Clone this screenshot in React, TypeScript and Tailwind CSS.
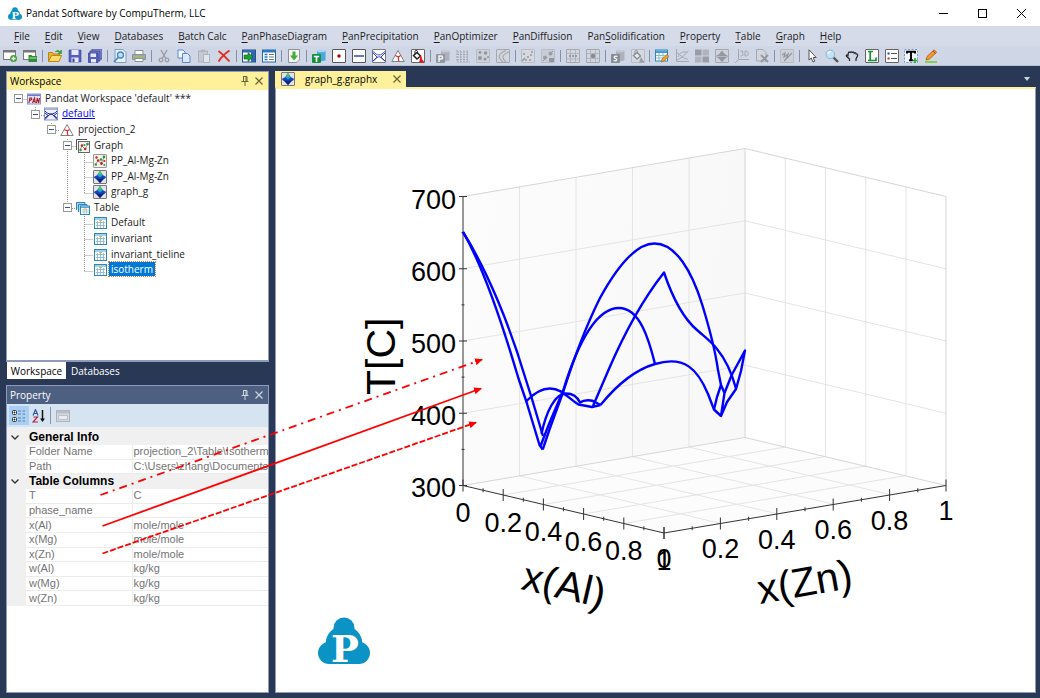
import { ReactNode } from "react";
import clsx from "clsx";

/* ---------- icons (14 x 14 grid) ---------- */

function Icon({ children, dim }: { children: ReactNode; dim?: boolean }) {
  return (
    <svg viewBox="0 0 14 14" className={clsx("h-[14px] w-[14px] shrink-0", dim && "opacity-80")} fill="none" aria-hidden="true">
      {children}
    </svg>
  );
}

const GREY = "#9a9da4";

const Frame = ({ stroke = "#555", fill = "#fff" }: { stroke?: string; fill?: string }) => (
  <rect x=".5" y=".5" width="13" height="13" rx=".5" stroke={stroke} fill={fill} />
);

const SurfaceIcon = () => (
  <Icon>
    <Frame stroke="#777" fill="#e4e4e8" />
    <path d="M.8 7C2.500 5.500 4 6 5 4L7 1 9 4c1 2 2.500 1.500 4.200 3C12 9 10 9 9 11l-2 2-2-2C4 9 2 9 .8 7Z" fill="#1746b8" />
    <path d="M4.500 5.500 5.500 3 7 1 8.500 3 9.500 5.500 7 7.500Z" fill="#18a8d8" />
    <path d="M5.300 4 7 1 8.700 4 7 5Z" fill="#62c832" />
    <path d="M2.500 8 7 9 11.500 8 9 10.800 7 13 5 10.800Z" fill="#10247c" />
  </Icon>
);

const ScatterIcon = () => (
  <Icon>
    <Frame stroke="#999" fill="#f3f3ee" />
    <path d="M2.500 10.500 5 6.500 8 9.500 11 3.500" stroke="#777" strokeWidth=".7" />
    <g fill="#c8202a">
      <circle cx="3.500" cy="3.500" r="1.200" />
      <circle cx="5.200" cy="6.500" r="1.300" />
      <circle cx="8.500" cy="9.500" r="1.400" />
      <circle cx="11.300" cy="7" r="1.100" />
    </g>
    <g fill="#2c9a38">
      <circle cx="2.800" cy="10.500" r="1.200" />
      <circle cx="11" cy="3" r="1.400" />
      <circle cx="8" cy="5.500" r="1.200" />
      <circle cx="11.300" cy="11" r="1" />
    </g>
  </Icon>
);

const GraphFolderIcon = () => (
  <Icon>
    <path d="M.5 11V.5H11" stroke="#555" />
    <rect x="2.500" y="2.500" width="11" height="11" stroke="#666" fill="#f3f3ee" />
    <path d="m4 11 2-4 3 3 3-5" stroke="#777" strokeWidth=".7" />
    <g fill="#c8202a">
      <circle cx="6" cy="6.500" r="1.300" />
      <circle cx="9.200" cy="10" r="1.300" />
    </g>
    <g fill="#2c9a38">
      <circle cx="4.600" cy="11" r="1.200" />
      <circle cx="11.500" cy="5" r="1.300" />
      <circle cx="8.500" cy="6" r="1" />
    </g>
  </Icon>
);

const TableIcon = () => (
  <Icon>
    <rect x="1.500" y="1.500" width="12" height="11" stroke="#2f86b8" fill="#fff" />
    <path d="M2 2h11v2H2Z" fill="#9fd2ea" />
    <path d="M3 6.500h9M3 9.500h9M4.500 5v7M7.500 5v7M10.500 5v7" stroke="#7fb4d4" strokeWidth=".8" />
    <path d="M6 4.500h3" stroke="#e6b84a" />
  </Icon>
);

const TablesIcon = () => (
  <Icon>
    <path d="M.5 9V1.500H9V3" stroke="#2f86b8" fill="#a9d8ee" />
    <path d="M2.500 11V3.500H11V5" stroke="#2f86b8" fill="#a9d8ee" />
    <rect x="4.500" y="5" width="9" height="8.500" stroke="#2f86b8" fill="#fff" />
    <path d="M5 5.500h8V7H5Z" fill="#58a8d0" />
    <path d="M6 9h7M6 11h7M8 8v5M10.500 8v5" stroke="#9cc4da" strokeWidth=".8" />
    <path d="M8 8h3" stroke="#e6b84a" />
  </Icon>
);

const WorkspaceIcon = () => (
  <Icon>
    <rect x=".5" y="2" width="13" height="10" stroke="#8a94c4" fill="#dfe3f5" />
    <path d="M1 2.500h12v1.500H1Z" fill="#6b7cc0" />
    <path d="M2 11 2.800 6h1.700l.3 1.500L3 8.500M5.500 11l2-5 .8 5M6.300 9.500h2M9.500 11l.7-5 1.500 5 .8-5" stroke="#a81c2c" strokeWidth="1.100" />
  </Icon>
);

const SectionIcon = () => (
  <Icon>
    <Frame stroke="#777" />
    <path d="M1 2.500 4 5c2 1.300 4 1.300 6 0l3-2.500M1 4l4 4-4 4M13 4 9 8l4 4M1 12.500 5 8.500c1.500-1 2.500-1 4 0l4 4" stroke="#2a38c0" strokeWidth=".9" />
  </Icon>
);

const BatchIcon = () => (
  <Icon>
    <rect x=".5" y="1" width="13" height="12" stroke="#8c96c4" fill="#eef1fc" />
    <path d="M1 1h12v2H1Z" fill="#a8b2dc" />
    <path d="M1 4c3 4 9 4 12 0M1 12.500 5 8c1.500-1 2.500-1 4 0l4 4.500M1 6l3 2.500L1 11M13 6l-3 2.500L13 11" stroke="#1c2c9c" />
  </Icon>
);

const TriangleIcon = () => (
  <Icon>
    <path d="M7 1.500 13.200 12.500H.8Z" fill="#fff" stroke="#777" strokeWidth=".9" />
    <path d="M4.300 6.500 7.300 8M9.700 6.500 7.300 8M7.300 8 7.800 12.500" stroke="#e02020" strokeWidth="1.100" />
  </Icon>
);

/* toolbar drawings, group by group */
const TOOLBAR: { label: string; icon: ReactNode }[][] = [
  [
    {
      label: "New workspace",
      icon: (
        <Icon>
          <rect x=".5" y="1.500" width="12" height="9" fill="#fff" stroke="#777" />
          <path d="M1 2h11v1.500H1Z" fill="#777" />
          <circle cx="10.500" cy="9.500" r="3.500" fill="#3fa33a" />
          <path d="M8.500 9.500h4M10.500 7.500v4" stroke="#fff" strokeWidth="1.300" />
        </Icon>
      ),
    },
    {
      label: "Open workspace",
      icon: (
        <Icon>
          <rect x=".5" y="1.500" width="12" height="9" fill="#fff" stroke="#777" />
          <path d="M1 2h11v1.500H1Z" fill="#777" />
          <path d="M5.500 13V6h3l1 1H14v6Z" fill="#2f8f35" />
          <path d="M6.500 9h7" stroke="#b7e2b2" />
        </Icon>
      ),
    },
  ],
  [
    {
      label: "Open",
      icon: (
        <Icon>
          <path d="M.5 12.500V3.500h4l1 1.500h6v3" fill="#e8b53c" stroke="#b98618" />
          <path d="m.5 12.500 3-6h10l-2.500 6Z" fill="#ffd968" stroke="#b98618" />
          <path d="M7 3c2-2 4-2 5 0M13.500 1v3.500H10Z" stroke="#35a035" fill="#35a035" strokeWidth=".8" />
        </Icon>
      ),
    },
    {
      label: "Save",
      icon: (
        <Icon>
          <path d="M1 1h12v12H1Z" fill="#5560bd" stroke="#3a4598" strokeWidth=".6" />
          <path d="M3.500 1h7v5h-7Z" fill="#e8eafa" />
          <path d="M3.500 8.500h7V13h-7Z" fill="#e8eafa" />
          <path d="M4.500 9.500h2V13h-2Z" fill="#3a4598" />
        </Icon>
      ),
    },
    {
      label: "Save all",
      icon: (
        <Icon>
          <path d="M4 0h10v10H4Z" fill="#8d95d4" stroke="#3a4598" strokeWidth=".8" />
          <path d="M2 2h10v10H2Z" fill="#7079c8" stroke="#3a4598" strokeWidth=".8" />
          <path d="M.5 4h9.500v9.500H.5Z" fill="#5560bd" stroke="#3a4598" strokeWidth=".8" />
          <path d="M2.500 4.500H8V8H2.500ZM3 10h5v3.500H3Z" fill="#e8eafa" />
        </Icon>
      ),
    },
  ],
  [
    {
      label: "Print preview",
      icon: (
        <Icon>
          <path d="M2 .5h8l3 3v10H2Z" fill="#e8f1fb" stroke="#7d9cc4" />
          <circle cx="7.500" cy="6" r="3" fill="#bfe0f8" stroke="#4a84c4" strokeWidth="1.300" />
          <path d="M5 8.500 1 13" stroke="#4a84c4" strokeWidth="1.800" />
        </Icon>
      ),
    },
    {
      label: "Print",
      icon: (
        <Icon>
          <path d="M3 1.500h8v4H3Z" fill="#fff" stroke="#8c9298" />
          <path d="M.5 5.500h13v5H.5Z" fill="#a2a8a4" stroke="#8c9298" />
          <path d="M3 9.500h8v3H3Z" fill="#fff" stroke="#8c9298" />
          <path d="M2 7.500h10" stroke="#8ccf4c" />
        </Icon>
      ),
    },
  ],
  [
    {
      label: "Cut",
      icon: (
        <Icon>
          <path d="m4 1 4.500 8M10 1 5.500 9" stroke={GREY} strokeWidth="1.500" />
          <circle cx="4" cy="11" r="1.800" stroke={GREY} strokeWidth="1.300" />
          <circle cx="10" cy="11" r="1.800" stroke={GREY} strokeWidth="1.300" />
        </Icon>
      ),
    },
    {
      label: "Copy",
      icon: (
        <Icon>
          <path d="M1 1h5l2 2v6H1Z" fill="#f5f9ff" stroke="#5c86c8" />
          <path d="M5.500 4.500h5l2.500 2.500v6.500H5.500Z" fill="#dbe9fb" stroke="#5c86c8" />
        </Icon>
      ),
    },
    {
      label: "Paste",
      icon: (
        <Icon dim>
          <path d="M1.500 2h9v11h-9Z" fill="#c3c7cf" stroke="#a5a9b1" />
          <path d="M4 .8h4v2H4Z" fill="#a5a9b1" />
          <path d="M6.500 5.500h6v8h-6Z" fill="#e6e8ee" stroke="#a5a9b1" />
        </Icon>
      ),
    },
    {
      label: "Delete",
      icon: (
        <Icon>
          <path d="M1.500 2c4 3 8 7 11 10.500M12.500 1.500C8 4.500 4 8.500 1.500 12.500" stroke="#e0301c" strokeWidth="1.900" />
        </Icon>
      ),
    },
  ],
  [
    {
      label: "Workspace view",
      icon: (
        <Icon>
          <rect x=".5" y="1" width="13" height="12" fill="#fff" stroke="#24508c" />
          <path d="M1 1h12v2.500H1ZM9 3.500h4V13H9Z" fill="#2f68b0" />
          <path d="M2 6h4V3.500L11 8l-5 4.500V10H2Z" fill="#20a030" stroke="#0b5c18" strokeWidth=".6" />
        </Icon>
      ),
    },
    {
      label: "Property view",
      icon: (
        <Icon>
          <rect x=".5" y="1" width="13" height="12" fill="#fff" stroke="#2468a8" />
          <path d="M1 1h12v2.500H1Z" fill="#2f78c0" />
          <path d="M2.500 5.500h3M2.500 8h3M2.500 10.500h3" stroke="#2f78c0" strokeWidth="1.500" />
          <path d="M7 5.500h5M7 8h5M7 10.500h5" stroke="#777" />
        </Icon>
      ),
    },
  ],
  [
    {
      label: "Load database",
      icon: (
        <Icon>
          <path d="M1.500.5h11v9c0 2-1.500 3.500-3.500 4H1.500Z" fill="#f6f6f4" stroke="#8e9298" />
          <path d="M5.500 2.500h3v4H11l-4 5-4-5h2.500Z" fill="#42ac3c" />
        </Icon>
      ),
    },
  ],
  [
    {
      label: "Thermodynamic database",
      icon: (
        <Icon>
          <path d="M5 2c0-1.500 8.500-1.500 8.500 0v9c0 1.500-8.500 1.500-8.500 0Z" fill="#4aa6dc" />
          <ellipse cx="9.200" cy="2" rx="4.200" ry="1.300" fill="#a4d8f4" />
          <rect x="0" y="5" width="9" height="9" rx="1" fill="#149038" />
          <path d="M1.800 7.500h5.400M4.500 7.500V13" stroke="#fff" strokeWidth="1.700" />
        </Icon>
      ),
    },
    {
      label: "Point calculation",
      icon: (
        <Icon>
          <Frame />
          <circle cx="7" cy="7" r="1.800" fill="#a01010" />
        </Icon>
      ),
    },
    {
      label: "Line calculation",
      icon: (
        <Icon>
          <Frame />
          <path d="M2 7h10" stroke="#2d45cc" strokeWidth="1.500" />
        </Icon>
      ),
    },
    { label: "Section calculation", icon: <SectionIcon /> },
    { label: "Projection", icon: <TriangleIcon /> },
    {
      label: "Solidification",
      icon: (
        <Icon>
          <Frame stroke="#666" />
          <path d="m2.500 6.500 3.500-3 3.500 3.500-3.500 3Z" fill="#fff" stroke="#222" strokeWidth="1.500" />
          <path d="M4 5.500V2.500C4 1 6.500 1 6.500 2.500V5" stroke="#222" />
          <path d="M8 13.500 9.500 8 13.500 13.500Z" fill="#e01818" />
          <path d="m9 7 1.500 2.500" stroke="#e01818" strokeWidth="1.500" />
        </Icon>
      ),
    },
  ],
  [
    {
      label: "Precipitation database",
      icon: (
        <Icon dim>
          <path d="M5 2c0-1.500 8.500-1.500 8.500 0v9c0 1.500-8.500 1.500-8.500 0Z" fill="#a6a9b0" />
          <ellipse cx="9.200" cy="2" rx="4.200" ry="1.300" fill="#c6c8ce" />
          <rect x="0" y="5" width="9" height="9" rx="1" fill="#84878e" />
          <path d="M3 13V7h2c2.200 0 2.200 3 0 3H3" stroke="#fff" strokeWidth="1.400" />
        </Icon>
      ),
    },
    {
      label: "Precipitation grid",
      icon: (
        <Icon dim>
          <path d="M1 1v12h13M1 3h12M1 5.500h12M1 8h12M1 10.500h12" stroke={GREY} strokeDasharray="2 1" />
          <path d="M4.500 1v12M8 1v12M11.500 1v12" stroke={GREY} strokeWidth=".6" />
        </Icon>
      ),
    },
    {
      label: "Particle size",
      icon: (
        <Icon dim>
          <Frame stroke="#b3b6bd" fill="#cdd0d6" />
          <g fill="#85888f">
            <circle cx="4" cy="3.500" r="1.400" />
            <circle cx="9.500" cy="4" r="1.800" />
            <circle cx="4" cy="9" r="2" />
            <circle cx="9" cy="10" r="1.500" />
            <circle cx="12" cy="8" r="1" />
          </g>
        </Icon>
      ),
    },
    {
      label: "TTT diagram",
      icon: (
        <Icon dim>
          <Frame stroke={GREY} fill="#d4d6dc" />
          <path d="M10 1.500C1 5 2 9 7 13M13 3C5 6 6 9 10 13" stroke={GREY} strokeWidth="1.200" />
        </Icon>
      ),
    },
  ],
  [
    {
      label: "Optimizer point",
      icon: (
        <Icon dim>
          <Frame stroke="#b3b6bd" fill="#d8dade" />
          <path d="M1 12 4 9M2 5h2M6 8h2M9 6h2M4 11h2M8 11h2M10 3h2" stroke="#85888f" strokeWidth="1.500" />
        </Icon>
      ),
    },
    {
      label: "Optimizer control",
      icon: (
        <Icon dim>
          <Frame stroke="#b3b6bd" fill="#c9ccd2" />
          <path d="M2 12 6 8M8 6l4-4" stroke="#85888f" />
          <circle cx="9.500" cy="4.500" r="2" fill="#8d9097" />
          <circle cx="4" cy="8.500" r="2" fill="#8d9097" />
          <path d="M8 9h5v4H8Z" fill="#85888f" />
        </Icon>
      ),
    },
  ],
  [
    {
      label: "Diffusion grid",
      icon: (
        <Icon dim>
          <Frame stroke={GREY} fill="#d4d6dc" />
          <path d="M4.500 1v12M9.500 1v12M1 4.500h12M1 10h12" stroke={GREY} strokeWidth=".7" />
          <path d="M3 7h8" stroke="#777a82" strokeWidth="1.500" strokeDasharray="2 1" />
        </Icon>
      ),
    },
    {
      label: "Diffusion point",
      icon: (
        <Icon dim>
          <Frame stroke={GREY} fill="#d4d6dc" />
          <path d="M1 4.500h12M1 9.500h12M4.500 1v12M9.500 1v12" stroke={GREY} strokeWidth=".7" />
          <circle cx="7" cy="7" r="2.200" fill="#777a82" />
        </Icon>
      ),
    },
  ],
  [
    {
      label: "Solidification database",
      icon: (
        <Icon dim>
          <path d="M5 2c0-1.500 8.500-1.500 8.500 0v9c0 1.500-8.500 1.500-8.500 0Z" fill="#a6a9b0" />
          <ellipse cx="9.200" cy="2" rx="4.200" ry="1.300" fill="#c6c8ce" />
          <rect x="0" y="5" width="9" height="9" rx="1" fill="#777a82" />
          <path d="M6.500 7.500c-3-1-4.500 1-2 2s1 3-2 2" stroke="#fff" strokeWidth="1.300" />
        </Icon>
      ),
    },
    {
      label: "Solidification simulation",
      icon: (
        <Icon dim>
          <Frame stroke="#b3b6bd" fill="#d8dade" />
          <path d="m2.500 6.500 3.500-3 3.500 3.500-3.500 3Z" fill="#f0f0f2" stroke="#777a82" strokeWidth="1.300" />
          <path d="M4 5.500V2.500C4 1 6.500 1 6.500 2.500V5" stroke="#777a82" />
          <path d="M8 13.500 10 8 13.500 13.500Z" fill="#8d9097" />
        </Icon>
      ),
    },
  ],
  [
    {
      label: "Edit table",
      icon: (
        <Icon>
          <rect x=".5" y="1" width="12" height="11" fill="#fff" stroke="#2f86b8" />
          <path d="M1 1.500h11V4H1Z" fill="#3fa0d8" />
          <path d="M1 6.500h11M1 9h11M4 4v8M8 4v8" stroke="#8bbad2" />
          <path d="m6 13 1-3 5-4.500 2 2L9 12Z" fill="#f0a030" stroke="#a86010" strokeWidth=".6" />
        </Icon>
      ),
    },
    {
      label: "Plot",
      icon: (
        <Icon dim>
          <path d="M1.500 0v12.500H14M1.500 11c4-1 7-4 12-9M1.500 4c3 0 6 6 11 6M3 8c2-5 4-5 9-5" stroke={GREY} />
        </Icon>
      ),
    },
    {
      label: "Tile",
      icon: (
        <Icon dim>
          <path d="M0 .5h6.500v6H0ZM7.500 7.500H14v6H7.500Z" fill="#8d9097" />
          <path d="M7.500.5H14v6H7.500ZM0 7.500h6.500v6H0Z" fill="#a9acb3" />
        </Icon>
      ),
    },
    {
      label: "Surface",
      icon: (
        <Icon dim>
          <Frame stroke={GREY} fill="#d0d2d8" />
          <path d="M1 7C2.500 5.500 4 6 5 4L7 1.500 9 4c1 2 2.500 1.500 4 3-1 2-3 2-4 4l-2 2-2-2C4 9 2 9 1 7Z" fill="#85888f" />
          <path d="M2 7.500h10" stroke="#b0b3b9" />
        </Icon>
      ),
    },
    {
      label: "3D",
      icon: (
        <Icon dim>
          <path d="M3.500 0v10.500H14M3.500 10.500 0 14" stroke={GREY} />
          <path d="M5.500 2h2.500l-1 2c2 0 1.500 3.500-1.500 3M10 2v5h1c3 0 3-5 0-5Z" stroke={GREY} />
        </Icon>
      ),
    },
    {
      label: "Export",
      icon: (
        <Icon dim>
          <path d="M1.500.5H8l3 3V12H1.500Z" fill="#d4d6dc" stroke={GREY} />
          <path d="m6 6 7 7M13 6l-7 7" stroke="#85888f" strokeWidth="1.800" />
        </Icon>
      ),
    },
  ],
  [
    {
      label: "Refresh graph",
      icon: (
        <Icon dim>
          <Frame stroke="#b3b6bd" fill="#cdd0d6" />
          <path d="m2 6 3-2-1 4 4-3-2 5 6-6M4 12l8-8" stroke="#85888f" strokeWidth="1.200" />
        </Icon>
      ),
    },
  ],
  [
    {
      label: "Select",
      icon: (
        <Icon>
          <path d="M4 .8V11l2.300-2 1.700 4 1.800-.8-1.600-3.700h3Z" fill="#fff" stroke="#444" strokeWidth=".9" />
        </Icon>
      ),
    },
    {
      label: "Zoom",
      icon: (
        <Icon>
          <path d="m8.500 8.500 4.500 4.500" stroke="#555" strokeWidth="2.400" />
          <circle cx="5.300" cy="5.300" r="4.300" fill="#bfe3f8" stroke="#8fb4cc" />
          <path d="M3 5c0-2 2-2.500 3-2.300" stroke="#fff" strokeWidth="1.200" />
        </Icon>
      ),
    },
    {
      label: "Pan",
      icon: (
        <Icon>
          <path
            d="M4.500 12V10L1.500 7.300C.8 6.300 2 5.400 3 6.500L3.300 4C3.500 2.800 5 3 5 4 5.200 2.500 7 2.500 7.200 3.800 7.600 2.700 9.200 2.900 9.300 4.200 10 3.400 11.200 3.800 11.200 5 12.500 4.800 13 6 12.500 7L11 10V12"
            stroke="#222"
            strokeWidth="1.200"
          />
        </Icon>
      ),
    },
    {
      label: "Legend label",
      icon: (
        <Icon>
          <Frame stroke="#666" />
          <path d="M3 2.500h5M3 11.500h8V8.500M5.200 2.500v9" stroke="#169030" strokeWidth="1.700" />
        </Icon>
      ),
    },
    {
      label: "Legend",
      icon: (
        <Icon>
          <Frame stroke="#666" />
          <path d="M2.500 4.500h2" stroke="#2838b8" strokeWidth="2" />
          <path d="M2.500 9.500h2" stroke="#b82828" strokeWidth="2" />
          <path d="M6 4.500h6M6 9.500h6" stroke="#555" />
        </Icon>
      ),
    },
    {
      label: "Add text",
      icon: (
        <Icon>
          <rect x=".5" y=".5" width="13" height="13" fill="#eef2fa" stroke="#7c98c8" strokeDasharray="2 1.500" />
          <path d="M3 4.500V2.800h8v1.700M7 3v8M5 11.200h4" stroke="#000" strokeWidth="1.900" />
          <path d="M8.500 11.500h5M11 9v5" stroke="#2ca038" strokeWidth="1.600" />
        </Icon>
      ),
    },
    {
      label: "Draw",
      icon: (
        <Icon>
          <path d="m2 11 1-3.500L10 .8l2.700 2.400L5.500 10Z" fill="#f4982c" stroke="#a85c10" strokeWidth=".8" />
          <path d="m9 2 2.500 2.500" stroke="#d03020" />
          <path d="M1 13h12" stroke="#78cc28" strokeWidth="1.600" />
        </Icon>
      ),
    },
  ],
];

/* ---------- small shared pieces ---------- */

function Trefoil({ className }: { className: string }) {
  return (
    <svg viewBox="0 0 52 48" className={clsx("overflow-visible", className)} aria-label="Pandat">
      <g fill="#0a93c4">
        <circle cx="26" cy="11" r="10.500" />
        <circle cx="26" cy="27" r="18.500" />
        <circle cx="11" cy="36" r="11" />
        <circle cx="41" cy="36" r="11" />
        <path d="M11 40h30v7H11Z" />
      </g>
      <text x="13" y="45" fontSize="37" fontWeight="bold" fontFamily="DejaVu Serif, serif" fill="#fff">
        P
      </text>
    </svg>
  );
}

function PanelButtons() {
  return (
    <span className="ml-auto flex items-center gap-[6px] pr-[5px]">
      <button aria-label="Pin">
        <svg viewBox="0 0 8 10" className="h-[10px] w-2" fill="none" stroke="currentColor">
          <path d="M2 .5h4v5M2.500.5v5M5 .5v5M.5 5.500h7M4 5.500V10" />
        </svg>
      </button>
      <button aria-label="Close">
        <CloseMark />
      </button>
    </span>
  );
}

const CloseMark = () => (
  <svg viewBox="0 0 8 8" className="h-2 w-2" stroke="currentColor" strokeWidth="1.200">
    <path d="m.5.500 7 7M7.500.500l-7 7" />
  </svg>
);

/* ---------- menu ---------- */

// the "&" marks the access key
const MENU = [
  "&File",
  "&Edit",
  "&View",
  "&Databases",
  "&Batch Calc",
  "&PanPhaseDiagram",
  "&PanPrecipitation",
  "&PanOptimizer",
  "&PanDiffusion",
  "Pan&Solidification",
  "&Property",
  "&Table",
  "&Graph",
  "&Help",
];

function MenuItem({ label }: { label: string }) {
  const [before, after] = label.split("&");
  return (
    <button className="whitespace-nowrap">
      {before}
      <span className="underline underline-offset-2">{after[0]}</span>
      {after.slice(1)}
    </button>
  );
}

/* ---------- workspace tree ---------- */

interface TreeItem {
  label: string;
  level: number;
  icon: ReactNode;
  open?: boolean;
  link?: boolean;
  selected?: boolean;
}

const TREE: TreeItem[] = [
  { label: "Pandat Workspace 'default' ***", level: 0, icon: <WorkspaceIcon />, open: true },
  { label: "default", level: 1, icon: <BatchIcon />, open: true, link: true },
  { label: "projection_2", level: 2, icon: <TriangleIcon />, open: true },
  { label: "Graph", level: 3, icon: <GraphFolderIcon />, open: true },
  { label: "PP_Al-Mg-Zn", level: 4, icon: <ScatterIcon /> },
  { label: "PP_Al-Mg-Zn", level: 4, icon: <SurfaceIcon /> },
  { label: "graph_g", level: 4, icon: <SurfaceIcon /> },
  { label: "Table", level: 3, icon: <TablesIcon />, open: true },
  { label: "Default", level: 4, icon: <TableIcon /> },
  { label: "invariant", level: 4, icon: <TableIcon /> },
  { label: "invariant_tieline", level: 4, icon: <TableIcon /> },
  { label: "isotherm", level: 4, icon: <TableIcon />, selected: true },
];

const INDENT = ["pl-[7px]", "pl-6", "pl-10", "pl-14", "pl-[73px]"];

function Tree() {
  return (
    <div className="relative h-[187px]">
      {/* dotted connectors */}
      <svg viewBox="0 0 120 187" className="absolute left-0 top-0 h-[187px] w-[120px]" fill="none" stroke="#9a9a9a" strokeDasharray="1 1">
        <path d="M12.500 8.500H21M28.500 16v8.500H37M44.500 32v7.500H53M60.500 48v69.500H69M60.500 55.500H69M77.500 63v39.500M77.500 71.500H86M77.500 86.500H86M77.500 102.500H86M77.500 125v55.500M77.500 133.500H86M77.500 148.500H86M77.500 164.500H86M77.500 180.500H86" />
      </svg>
      <ul role="tree" className="relative flex h-full flex-col">
        {TREE.map((item, i) => (
          <li key={i} role="treeitem" className={clsx("flex min-h-0 flex-1 items-center", INDENT[item.level])}>
            {item.open ? (
              <button aria-label={`Collapse ${item.label}`} className="flex h-[9px] w-[9px] items-center justify-center border border-[#9a9a9a] bg-white">
                <span className="h-px w-[5px] bg-[#3a4ea0]" />
              </button>
            ) : (
              <span className="w-[9px]" />
            )}
            <span className="ml-1 flex">{item.icon}</span>
            {item.link ? (
              <a href="#default" className="mb-[2px] ml-1 leading-[14px] text-[#0000ff] underline">
                {item.label}
              </a>
            ) : (
              <span
                className={clsx(
                  "mb-[2px] ml-[2px] px-[2px] leading-[14px]",
                  item.selected && "bg-[#0078d7] text-white outline-1 outline-dotted outline-[#c8803c]"
                )}
              >
                {item.label}
              </span>
            )}
          </li>
        ))}
      </ul>
    </div>
  );
}

/* ---------- property grid ---------- */

const PROPERTIES = [
  {
    group: "General Info",
    rows: [
      ["Folder Name", "projection_2\\Table\\Isotherm"],
      ["Path", "C:\\Users\\zhang\\Documents\\"],
    ],
  },
  {
    group: "Table Columns",
    rows: [
      ["T", "C"],
      ["phase_name", ""],
      ["x(Al)", "mole/mole"],
      ["x(Mg)", "mole/mole"],
      ["x(Zn)", "mole/mole"],
      ["w(Al)", "kg/kg"],
      ["w(Mg)", "kg/kg"],
      ["w(Zn)", "kg/kg"],
    ],
  },
];

function PropertyGrid() {
  return (
    <table className="h-[176px] w-full table-fixed border-collapse font-['Liberation_Sans',sans-serif] text-[11px] leading-[13px] text-[#747474]">
      <colgroup>
        <col className="w-[19px]" />
        <col className="w-[106px]" />
        <col />
      </colgroup>
      {PROPERTIES.map(({ group, rows }) => (
        <tbody key={group}>
          <tr className="h-[14px] bg-[#f0f0f0] text-left text-black">
            <td className="p-0">
              <svg viewBox="0 0 8 5" className="ml-1 h-[5px] w-2" fill="none" stroke="#333" strokeWidth="1.300">
                <path d="m.5.500 3.500 3.500L7.500.500" />
              </svg>
            </td>
            <th colSpan={2} scope="rowgroup" className="p-0 pl-[3px] text-[12px] font-bold">
              {group}
            </th>
          </tr>
          {rows.map(([name, value]) => (
            <tr key={name} className="h-[14px]">
              <td className="bg-[#f0f0f0] p-0" />
              <th scope="row" className="border-b border-r border-[#ececec] p-0 pl-[3px] text-left font-normal">
                {name}
              </th>
              <td className="whitespace-nowrap border-b border-[#ececec] p-0 pl-px">{value}</td>
            </tr>
          ))}
        </tbody>
      ))}
    </table>
  );
}

/* ---------- 3D chart ---------- */

const CURVES = [
  // falling pair on the left
  "M463 232C483 266 503 326 518.500 378.500L526.500 402 539.500 445 542.700 449.500",
  "M463 232C487 270 510 326 525.500 378.500L531.700 398 543 436",
  // eutectic V and the two arches that rise from it
  "M542.700 449.500 550 428 563.500 391C575 355 588 322 600 298C622 258 640 243.500 654.500 243.500C676 243.500 692 272 702 304C710 330 716 356 718 370L721 385 724.500 393",
  "M540.500 446 549 424 563 391C575 352 594 308 619 308C640 308 649 340 655 364",
  // low arches
  "M526.500 401C536 391 543 388.500 550 388.500C562 388.500 568 398 578.500 404.500L592 407 600.500 405",
  "M541.500 434C546 412 555 393.500 566 393.500C572 393.500 577 396 580 402.500C584 399.500 592 399.500 595 402L600.500 405",
  // ridge
  "M593 406 608.500 370C624 334 640 303 664 272.500C674 302 684 319 697 330C706 338 711 341 717 349C727 361 732 374 736 388.500",
  "M600.500 405C616 386 634 370 655 364C685 355 698 370 708 394L714 409.500 721 416",
  // valley on the right
  "M714 409.500 717 397 721 385M721 416 724.500 393 731.700 375 745 350.500 741 371 736 389 727 402Z",
];

const AXIS_TICKS = [0, 1, 2, 3, 4, 5, 6, 7, 8, 9, 10];
const T_LABELS = [700, 600, 500, 400, 300];

function Chart() {
  return (
    <svg
      viewBox="276 89 760 604"
      className="h-[604px] w-[760px] shrink-0"
      fill="none"
      fontFamily="'Liberation Sans', Arial, sans-serif"
      role="img"
      aria-label="Liquidus projection of Al-Mg-Zn"
    >
      <defs>
        <linearGradient id="wall" x1="0" y1="0" x2="1" y2=".2">
          <stop offset="0" stopColor="#fcfcfc" />
          <stop offset="1" stopColor="#f8f8f8" />
        </linearGradient>
      </defs>
      <path d="M463 196.500 745 148.500V437.500L463 485.500Z" fill="url(#wall)" />
      <path d="M463 485.500 745 437.500 946 485.500 664 533Z" fill="#fcfcfc" />

      {/* wall and floor grid */}
      <g stroke="#e4e4e4">
        {[1, 2, 3, 4].map((i) => (
          <g key={i}>
            <path d={`M${463 + i * 56.5} ${196.5 - i * 9.6}v289`} />
            <path d={`M${745 + i * 40.25} ${148.5 + i * 9.6}v289`} />
            <path d={`M${463 + i * 56.5} ${485.5 - i * 9.6}l201 47.500`} />
            <path d={`M${463 + i * 40.25} ${485.5 + i * 9.5}l282 -48`} />
          </g>
        ))}
        {[1, 2, 3].map((i) => (
          <path key={i} d={`M463 ${196.5 + i * 72.25} 745 ${148.5 + i * 72.25} 946 ${196.5 + i * 72.25}`} />
        ))}
      </g>
      <path d="M463 196.500 745 148.500 946 196.500M463 485.500 745 437.500 946 485.500V196.500M745 148.500v289" stroke="#d6d6d6" />

      {/* axes */}
      <g stroke="#333">
        <path d="M463 196.500V485.500L664 533 946 485.500" />
        {AXIS_TICKS.map((i) => {
          const h = i % 2 ? 2 : 6;
          return (
            <g key={i}>
              <path d={`M${463 + i * 20.1} ${485.5 + i * 4.75 - h}v${h * 2}`} />
              <path d={`M${664 + i * 28.2} ${533 - i * 4.75 - h}v${h * 2}`} />
            </g>
          );
        })}
        {[0, 1, 2, 3, 4, 5, 6, 7, 8].map((i) => {
          const w = i % 2 ? 1.5 : 4;
          return <path key={i} d={`M${463 - w} ${196.5 + i * 36.125}h${w * 2}`} />;
        })}
      </g>

      <g stroke="#0000ff" strokeWidth="2.400" strokeLinejoin="round">
        {CURVES.map((d) => (
          <path key={d} d={d} />
        ))}
      </g>

      <g fill="#000" fontSize="27">
        {T_LABELS.map((t, i) => (
          <text key={t} x="456" y={209 + i * 72} textAnchor="end">
            {t}
          </text>
        ))}
        {["0", "0.2", "0.4", "0.6", "0.8", "1"].map((v, i) => (
          <g key={v} textAnchor="middle">
            <text x={463 + i * 40.2} y={522 + i * 9.5}>
              {v}
            </text>
            <text x={664 + i * 56.4} y={568 - i * 9.6}>
              {v}
            </text>
          </g>
        ))}
      </g>
      <g fill="#000" fontSize="41">
        <text transform="translate(395 395) rotate(-90)">T[C]</text>
        <text transform="translate(520 589) rotate(13)">x(Al)</text>
        <text transform="translate(760 604) rotate(-10)">x(Zn)</text>
      </g>
    </svg>
  );
}

/* arrows from the column names to the plot */
function Callouts() {
  return (
    <svg className="pointer-events-none absolute left-0 top-0 h-[698px] w-[1040px]" viewBox="0 0 1040 698" fill="none" stroke="#ff0000" strokeWidth="1.800">
      <defs>
        <marker id="head" viewBox="0 0 8 8" refX="7" refY="4" markerWidth="8" markerHeight="8" markerUnits="userSpaceOnUse" orient="auto">
          <path d="M0 .5 8 4 0 7.500Z" fill="#ff0000" stroke="none" />
        </marker>
      </defs>
      <path d="M100.500 495 482 359.500" strokeDasharray="8 5 2 5" markerEnd="url(#head)" />
      <path d="M102.500 526 481 388.500" markerEnd="url(#head)" />
      <path d="M102.500 553.500 476 422.500" strokeDasharray="6 2" markerEnd="url(#head)" />
    </svg>
  );
}

export default function App() {
  return (
    <div className="relative flex h-screen flex-col overflow-hidden bg-[#293955] font-['Open_Sans','Noto_Sans',sans-serif] text-[10px] leading-[14px] text-[#1b1b1b]">
      {/* Title bar */}
      <header className="flex h-[26px] shrink-0 items-center bg-white pl-2 text-black">
        <Trefoil className="mr-1 h-[13px] w-[14px]" />
        <h1>Pandat Software by CompuTherm, LLC</h1>
        <div className="ml-auto flex items-center gap-[30px] pr-[14px] text-black">
          <button aria-label="Minimize" className="h-px w-[9px] bg-black" />
          <button aria-label="Maximize" className="h-[9px] w-[9px] border border-black" />
          <button aria-label="Close window">
            <svg viewBox="0 0 9 9" className="h-[9px] w-[9px]" stroke="currentColor">
              <path d="m0 0 9 9M9 0 0 9" />
            </svg>
          </button>
        </div>
      </header>

      {/* Menu bar */}
      <nav className="flex h-5 shrink-0 items-center gap-[15px] bg-[#d6dbe9] pl-[14px]">
        {MENU.map((label) => (
          <MenuItem key={label} label={label} />
        ))}
      </nav>

      {/* Toolbar */}
      <div role="toolbar" className="flex h-5 shrink-0 items-center border-b border-[#b8c0d4] bg-[#cfd6e5]">
        <div className="flex w-[941px] items-center">
          {TOOLBAR.map((group, g) => (
            <div key={g} className="contents">
              {g > 0 && (
                <span className="flex w-[5px] justify-center">
                  <span className="h-3 w-px bg-[#8591a8]" />
                </span>
              )}
              {group.map(({ label, icon }) => (
                <button key={label} aria-label={label} className="flex w-5 justify-center">
                  {icon}
                </button>
              ))}
            </div>
          ))}
        </div>
      </div>

      <div className="flex min-h-0 flex-1 gap-[6px] pb-[5px] pl-[6px] pr-1 pt-[5px]">
        <aside className="flex w-[263px] shrink-0 flex-col">
          {/* Workspace */}
          <section className="flex h-[291px] shrink-0 flex-col border border-b-2 border-[#8e9bbc] bg-white">
            <h2 className="flex h-[18px] shrink-0 items-center bg-[#fff09b] pl-[3px] text-black">
              Workspace
              <span className="ml-auto flex text-[#6b6338]">
                <PanelButtons />
              </span>
            </h2>
            <div className="pt-px">
              <Tree />
            </div>
          </section>
          <div role="tablist" className="flex h-[17px] shrink-0">
            <button role="tab" aria-selected="true" className="ml-px w-[59px] bg-white text-black">
              Workspace
            </button>
            <button role="tab" aria-selected="false" className="px-[5px] text-white">
              Databases
            </button>
          </div>

          {/* Property */}
          <section className="mt-[6px] flex min-h-0 flex-1 flex-col border border-[#8e9bbc] bg-white">
            <h2 className="flex h-[18px] shrink-0 items-center bg-[#4d6082] pl-[3px] text-white">
              Property
              <span className="ml-auto flex text-[#ced4dd]">
                <PanelButtons />
              </span>
            </h2>
            <div className="flex h-[23px] shrink-0 items-center bg-[#d6e4f2] pl-[2px]">
              <button aria-label="Categorized" className="flex h-[19px] w-5 items-center justify-center bg-[#a8d0f4]">
                <Icon>
                  <rect x=".5" y="1.500" width="4" height="4" rx="1" stroke="#333" fill="#fff" />
                  <rect x=".5" y="8.500" width="4" height="4" rx="1" stroke="#333" fill="#fff" />
                  <path d="M1.500 3.500h2M1.500 10.500h2M2.500 2.500v2M2.500 9.500v2" stroke="#222" strokeWidth=".8" />
                  <path d="M6 2h3M10.500 2H13M6 5h3M10.500 5H13M6 9h3M10.500 9H13M6 12h3M10.500 12H13" stroke="#6a7f98" />
                </Icon>
              </button>
              <button aria-label="Alphabetical" className="flex w-5 items-center justify-center">
                <Icon>
                  <path d="m1 6.500 2.500-6 2.500 6M2 4.500h3" stroke="#2858b0" strokeWidth="1.200" />
                  <path d="M1.500 8h4L1 13h5" stroke="#b02838" strokeWidth="1.200" />
                  <path d="M10.500 1v9.500" stroke="#111" strokeWidth="1.500" />
                  <path d="M8 9.500h5L10.500 13Z" fill="#111" />
                </Icon>
              </button>
              <span className="mx-[1px] h-[17px] w-px bg-[#8a96a8]" />
              <button aria-label="Property pages" className="ml-1 flex">
                <Icon dim>
                  <rect x=".5" y="1.500" width="13" height="11" stroke="#a5a9b1" fill="#d4d6da" />
                  <path d="M1 2h12v2.500H1Z" fill="#b4b7bd" />
                  <path d="M2.500 6.500h9v4h-9Z" fill="#eceef0" stroke="#a5a9b1" strokeWidth=".7" />
                </Icon>
              </button>
            </div>
            <div className="min-h-0 flex-1 overflow-hidden border-t-[3px] border-[#f0f0f0]">
              <PropertyGrid />
            </div>
          </section>
        </aside>

        {/* Document area */}
        <main className="flex min-w-0 flex-1 flex-col">
          <div role="tablist" className="flex h-4 shrink-0 items-center">
            <div role="tab" aria-selected="true" className="flex h-full w-[131px] items-center bg-[#fff09b] pl-[6px] pr-[5px] text-black">
              <SurfaceIcon />
              <span className="ml-[10px]">graph_g.graphx</span>
              <button aria-label="Close tab" className="ml-auto text-[#6b6338]">
                <CloseMark />
              </button>
            </div>
            <button aria-label="Window list" className="ml-auto mr-[6px]">
              <svg viewBox="0 0 6 4" className="h-1 w-[6px]" fill="#ced4dd">
                <path d="M0 0h6L3 4Z" />
              </svg>
            </button>
          </div>
          <div className="flex min-h-0 flex-1 overflow-hidden border border-t-2 border-[#8e9bbc] border-t-[#fff09b] bg-white">
            <div className="relative">
              <Chart />
              <Trefoil className="absolute left-[42px] top-[528px] h-12 w-[52px]" />
            </div>
          </div>
        </main>
      </div>

      <Callouts />
    </div>
  );
}
